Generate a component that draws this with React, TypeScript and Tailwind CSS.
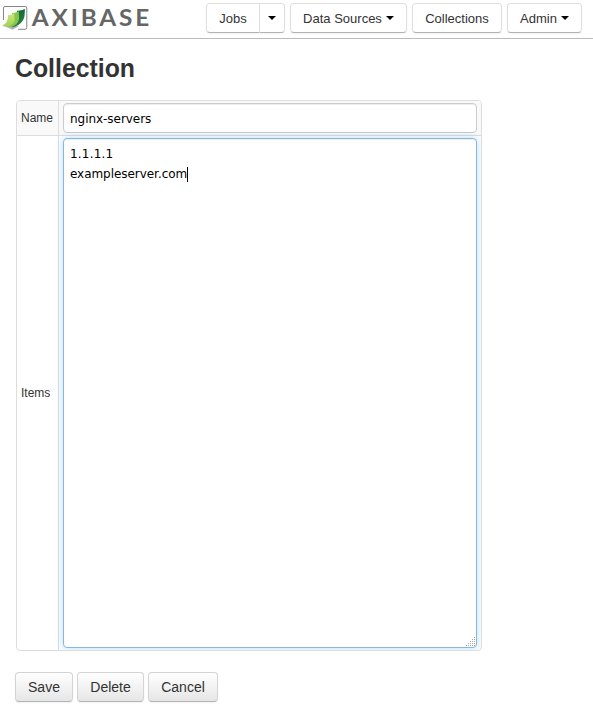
import type { ReactNode } from "react";

function Caret() {
  return <span className="ml-1 inline-block border-x-4 border-t-4 border-x-transparent border-t-black align-[3px]" />;
}

function NavButton({ className, children }: { className: string; children: ReactNode }) {
  return (
    <button
      className={`h-[30px] shrink-0 whitespace-nowrap border border-[#e0e0e0] border-b-[#b3b3b3] bg-white pt-[2px] text-center text-[13px] leading-5 text-[#333] shadow-[0_1px_2px_rgba(0,0,0,0.05)] ${className}`}
    >
      {children}
    </button>
  );
}

function FormButton({ className, children }: { className: string; children: ReactNode }) {
  return (
    <button
      className={`h-[30px] rounded-[4px] border border-[#d4d4d4] border-b-[#b3b3b3] bg-linear-to-b from-white to-[#e6e6e6] text-center text-[14px] leading-5 text-[#333] shadow-[inset_0_1px_0_rgba(255,255,255,0.2),0_1px_2px_rgba(0,0,0,0.05)] ${className}`}
    >
      {children}
    </button>
  );
}

function Logo() {
  return (
    <svg className="block h-[38px] w-[160px] shrink-0" viewBox="0 0 160 38" role="img" aria-label="Axibase">
      <defs>
        <linearGradient id="leafLight" x1="0" y1="0" x2="0" y2="1">
          <stop offset="0" stopColor="#cde67c" />
          <stop offset="1" stopColor="#a3d355" />
        </linearGradient>
        <linearGradient id="leafDark" x1="0" y1="0" x2="0" y2="1">
          <stop offset="0" stopColor="#126b3c" />
          <stop offset="1" stopColor="#278543" />
        </linearGradient>
      </defs>
      <path d="M3.5 20V8Q3.5 6.5 5 6.5H25Q26.8 6.5 26.8 8V27.5Q26.8 29.3 25 29.3H18" fill="none" stroke="#858585" strokeWidth="1" />
      <path d="M4 26L12.5 29.8L19 26L13 25Z" fill="#b5b5b5" />
      <path d="M17 10.8Q21 11 25 9C24.4 13.5 25.4 17 22.5 21Q19.5 25.8 11.5 27.5L17 21Z" fill="url(#leafDark)" />
      <path d="M12 13.2Q15.8 13 19 11.3C18.5 15.5 20 18.5 18 22Q15.3 26.8 8 27L12 20Z" fill="#86c548" />
      <path d="M8 15.2Q11.4 15 14.3 13.2C13.9 17 15.6 20 13.6 23Q10.5 27 2 26Q8.4 22.5 8 15.2Z" fill="url(#leafLight)" />
      <text x="31.7" y="25.7" textLength="120.5" lengthAdjust="spacingAndGlyphs" className="fill-[#666] font-['Lato',sans-serif] text-[22px] font-bold tracking-[2.6px]">
        AXIBASE
      </text>
    </svg>
  );
}

export default function App() {
  return (
    <div className="h-[709px] w-[593px] overflow-hidden bg-white font-['Liberation_Sans',Arial,sans-serif] text-[#333]">
      <header className="flex h-[39px] items-start border-b border-[#bbb]">
        <Logo />
        <nav className="ml-[46px] flex gap-[5px] pt-[3px]">
          <div className="flex">
            <NavButton className="w-[54px] rounded-l-[4px]">Jobs</NavButton>
            <NavButton className="w-[25px] rounded-r-[4px] border-l-0">
              <span className="inline-block border-x-4 border-t-4 border-x-transparent border-t-black align-[3px]" />
            </NavButton>
          </div>
          <NavButton className="w-[117px] rounded-[4px]">Data Sources<Caret /></NavButton>
          <NavButton className="w-[90px] rounded-[4px]">Collections</NavButton>
          <NavButton className="w-[75px] rounded-[4px]">Admin<Caret /></NavButton>
        </nav>
      </header>

      <main className="pl-[15px]">
        <h3 className="flex h-[61px] origin-left scale-x-[0.955] items-center pb-[4px] text-[26px] leading-10 font-bold">Collection</h3>

        <div className="ml-px grid h-[551px] w-[466px] grid-cols-[41px_1fr] grid-rows-[34px_1fr] overflow-hidden rounded-[4px] border border-[#ddd] text-[12px]">
          <label className="flex items-center bg-[#f9f9f9] pl-1">Name</label>
          <div className="border-l border-[#ddd] bg-[#f9f9f9] px-1 pt-[2px]">
            <input
              className="block h-[30px] w-full rounded-[4px] border border-[#ccc] bg-white px-[6px] pt-px font-['DejaVu_Sans',sans-serif] text-[12px] tracking-[-0.04px] text-black shadow-[inset_0_1px_1px_rgba(0,0,0,0.075)] outline-none"
              defaultValue="nginx-servers"
            />
          </div>
          <label className="flex items-center border-t border-[#ddd] pl-1">Items</label>
          <div className="border-t border-l border-[#ddd] px-1 pt-[2px]">
            <div className="flex h-[510px] flex-col rounded-[4px] border border-[#82b9e3] bg-white px-[6px] pt-[5px] font-['DejaVu_Sans',sans-serif] text-[12px] leading-5 text-black shadow-[inset_0_1px_1px_rgba(0,0,0,0.075),0_0_8px_rgba(82,168,236,0.4)]">
              <span className="tracking-[0.2px]">1.1.1.1</span>
              <span className="flex items-center tracking-[-0.05px]">
                exampleserver.com
                <span className="h-[15px] w-px bg-black" />
              </span>
              <svg className="mt-auto -mr-[6px] h-[10px] w-[10px] self-end" viewBox="0 0 10 10" fill="#aaa" shapeRendering="crispEdges">
                <path d="M8 0h1v1h-1zM6 2h1v1h-1zM8 2h1v1h-1zM4 4h1v1h-1zM6 4h1v1h-1zM8 4h1v1h-1zM2 6h1v1h-1zM4 6h1v1h-1zM6 6h1v1h-1zM8 6h1v1h-1zM0 8h1v1h-1zM2 8h1v1h-1zM4 8h1v1h-1zM6 8h1v1h-1zM8 8h1v1h-1z" />
              </svg>
            </div>
          </div>
        </div>

        <div className="mt-[21px] flex gap-1">
          <FormButton className="w-[58px]">Save</FormButton>
          <FormButton className="w-[67px]">Delete</FormButton>
          <FormButton className="w-[70px]">Cancel</FormButton>
        </div>
      </main>
    </div>
  );
}
